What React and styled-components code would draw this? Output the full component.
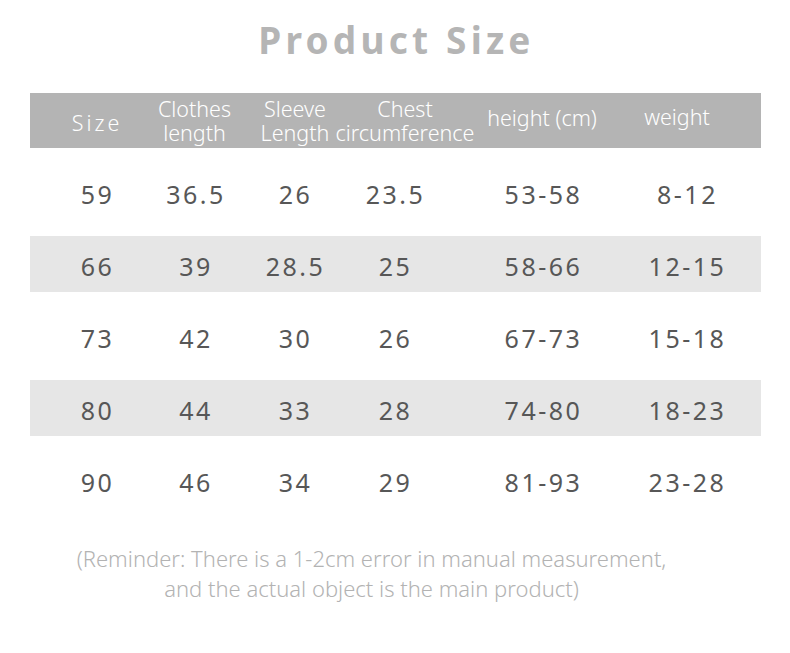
import React from "react";
import styled, { createGlobalStyle } from "styled-components";

const Global = createGlobalStyle`
  html, body { margin: 0; padding: 0; background: #fff; }
  body { font-family: "Noto Sans", "Open Sans", sans-serif; }
`;

const Page = styled.div`
  width: 790px;
  height: 653px;
  box-sizing: border-box;
  padding: 0 29px 0 30px;
  display: flex;
  flex-direction: column;
`;

const Title = styled.h1`
  margin: 0;
  height: 93px;
  display: flex;
  align-items: center;
  justify-content: center;
  padding-bottom: 14px;
  padding-left: 2px;
  box-sizing: border-box;
  font-size: 37px;
  font-weight: 700;
  letter-spacing: 4.2px;
  color: #b5b5b5;
`;

const COLS = "116px 97px 102px 98px 198px 120px";

const HeadRow = styled.div`
  display: grid;
  grid-template-columns: ${COLS};
  height: 55px;
  background: #b4b4b4;
  align-items: center;
`;

const HeadCell = styled.div`
  display: flex;
  flex-direction: column;
  align-items: center;
  color: #fff;
  font-size: 21.5px;
  font-weight: 300;
  line-height: 24px;
  white-space: nowrap;
  letter-spacing: ${(p) => p.$ls || 0}px;
  padding-left: ${(p) => p.$pl || 0}px;
  padding-right: ${(p) => p.$pr || 0}px;
  padding-top: ${(p) => p.$pt || 0}px;
  margin-bottom: ${(p) => p.$mb || 0}px;
`;

const Body = styled.div`
  display: flex;
  flex-direction: column;
  padding-top: 10px;
`;

const Row = styled.div`
  display: grid;
  grid-template-columns: ${COLS};
  height: 72px;
  box-sizing: border-box;
  padding: 6px 0 10px;
  background: ${(p) => (p.$striped ? "#e6e6e6" : "transparent")};
  background-clip: content-box;
  align-items: center;
`;

const Cell = styled.div`
  color: #575757;
  font-size: 25px;
  letter-spacing: 2.5px;
  text-align: center;
  padding-top: 4px;
  padding-left: ${(p) => (p.$pl || 0) + 3}px;
  padding-right: ${(p) => p.$pr || 0}px;
`;

const Note = styled.p`
  margin: 25px 0 0;
  padding-right: 48px;
  text-align: center;
  color: #b3b3b3;
  font-size: 22px;
  font-weight: 300;
  line-height: 30px;
`;

const rows = [
  ["59", "36.5", "26", "23.5", "53-58", "8-12"],
  ["66", "39", "28.5", "25", "58-66", "12-15"],
  ["73", "42", "30", "26", "67-73", "15-18"],
  ["80", "44", "33", "28", "74-80", "18-23"],
  ["90", "46", "34", "29", "81-93", "23-28"],
];

const cellPad = [{ pl: 16 }, {}, {}, {}, {}, { pr: 30 }];

export default function App() {
  return (
    <>
      <Global />
      <Page>
        <Title>Product Size</Title>
        <HeadRow>
          <HeadCell $ls={3} $pl={18} $pt={4}>Size</HeadCell>
          <HeadCell>
            <span>Clothes</span>
            <span>length</span>
          </HeadCell>
          <HeadCell $pl={2}>
            <span>Sleeve</span>
            <span>Length</span>
          </HeadCell>
          <HeadCell $pl={22}>
            <span>Chest</span>
            <span>circumference</span>
          </HeadCell>
          <HeadCell $mb={6}>height (cm)</HeadCell>
          <HeadCell $pr={48} $mb={8}>weight</HeadCell>
        </HeadRow>
        <Body>
          {rows.map((r, i) => (
            <Row key={r[0]} $striped={i % 2 === 1}>
              {r.map((v, j) => (
                <Cell key={j} $pl={cellPad[j].pl} $pr={cellPad[j].pr}>
                  {v}
                </Cell>
              ))}
            </Row>
          ))}
        </Body>
        <Note>
          (Reminder: There is a 1-2cm error in manual measurement,
          <br />
          and the actual object is the main product)
        </Note>
      </Page>
    </>
  );
}
